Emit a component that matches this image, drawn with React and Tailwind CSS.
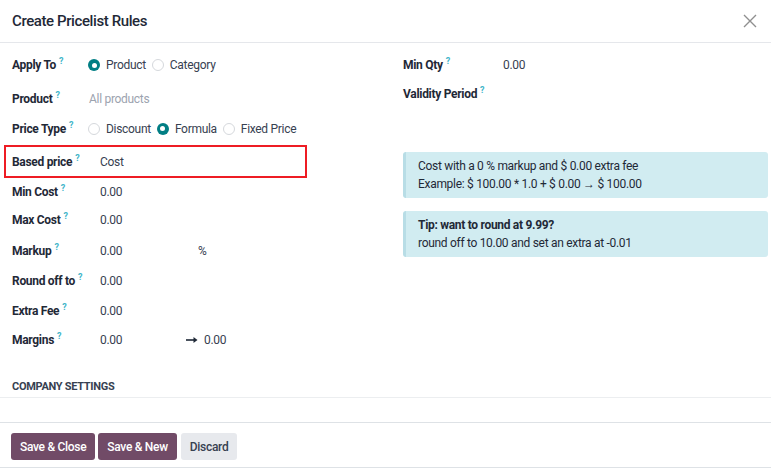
import React from "react";

const Help = () => (
  <span className="ml-[3px] text-[9px] font-bold text-[#3fb5c9] relative -top-[5px]">?</span>
);

const Radio = ({ checked, label }) => (
  <span className="flex items-center gap-[6px] mr-[6px]">
    {checked ? (
      <span className="w-[12px] h-[12px] rounded-full bg-[#017e84] flex items-center justify-center">
        <span className="w-[5px] h-[5px] rounded-full bg-white" />
      </span>
    ) : (
      <span className="w-[12px] h-[12px] rounded-full border border-[#d5d8dc] bg-white" />
    )}
    <span className="text-[#374151]">{label}</span>
  </span>
);

const Label = ({ children }) => (
  <div className="font-bold text-[#1f2937] whitespace-nowrap">
    {children}
    <Help />
  </div>
);

const Row = ({ label, children, h = "h-[30px]" }) => (
  <div className={`flex items-center ${h}`}>
    <div className="w-[76px] shrink-0">
      <Label>{label}</Label>
    </div>
    <div className="flex items-center text-[#374151]">{children}</div>
  </div>
);

export default function App() {
  return (
    <div
      className="w-[771px] h-[468px] bg-white text-[12px] tracking-[-0.3px] overflow-hidden flex flex-col"
      style={{ fontFamily: 'Roboto, "Noto Sans", sans-serif' }}
    >
      <div className="h-[43px] shrink-0 flex items-center justify-between px-[12px] border-b border-[#e5e7eb]">
        <div className="text-[15px] font-medium text-[#1f2937] tracking-[-0.4px]">Create Pricelist Rules</div>
        <svg width="14" height="14" viewBox="0 0 14 14" className="mr-[2px]">
          <path d="M1 1 L13 13 M13 1 L1 13" stroke="#8f8f8f" strokeWidth="1.4" />
        </svg>
      </div>

      <div className="flex-1 flex flex-col">
        <div className="flex pt-[7px]">
          <div className="w-[391px] shrink-0 flex flex-col pl-[12px]">
            <Row label="Apply To">
              <Radio checked label="Product" />
              <Radio label="Category" />
            </Row>
            <Row label="Product" h="h-[37px]">
              <span className="text-[#9ca3af] pl-[1px]">All products</span>
            </Row>
            <Row label="Price Type" h="h-[23px]">
              <Radio label="Discount" />
              <Radio checked label="Formula" />
              <Radio label="Fixed Price" />
            </Row>
            <div className="-ml-[8px] mt-[5px] w-[303px] h-[33px] border-2 border-[#ee1c24] flex items-center pl-[6px]">
              <div className="w-[88px] shrink-0">
                <Label>Based price</Label>
              </div>
              <span className="text-[#374151]">Cost</span>
            </div>
            <Row label="Min Cost" h="h-[27px]">
              <span className="pl-[12px]">0.00</span>
            </Row>
            <Row label="Max Cost">
              <span className="pl-[12px]">0.00</span>
            </Row>
            <Row label="Markup" h="h-[31px]">
              <span className="pl-[12px] w-[110px]">0.00</span>
              <span>%</span>
            </Row>
            <Row label="Round off to">
              <span className="pl-[12px]">0.00</span>
            </Row>
            <Row label="Extra Fee" h="h-[29px]">
              <span className="pl-[12px]">0.00</span>
            </Row>
            <Row label="Margins">
              <span className="pl-[12px] w-[98px]">0.00</span>
              <svg width="12" height="8" viewBox="0 0 12 8" className="mr-[6px]">
                <path d="M0 4 H9" stroke="#1f2937" strokeWidth="1.6" />
                <path d="M7.5 1 L11.5 4 L7.5 7 Z" fill="#1f2937" />
              </svg>
              <span>0.00</span>
            </Row>
          </div>

          <div className="flex-1 flex flex-col pl-[12px] pr-[3px]">
            <div className="flex items-center h-[30px]">
              <div className="w-[100px] shrink-0">
                <Label>Min Qty</Label>
              </div>
              <span className="text-[#374151]">0.00</span>
            </div>
            <div className="flex items-center h-[28px]">
              <Label>Validity Period</Label>
            </div>
            <div className="mt-[44px] bg-[#d1ecf1] border-l-[3px] border-[#b8dde6] rounded-[3px] h-[46px] flex flex-col justify-center pl-[12px] text-[#1f2937] leading-[18px]">
              <div>Cost with a 0 % markup and $ 0.00 extra fee</div>
              <div>Example: $ 100.00 * 1.0 + $ 0.00 → $ 100.00</div>
            </div>
            <div className="mt-[13px] bg-[#d1ecf1] border-l-[3px] border-[#b8dde6] rounded-[3px] h-[46px] flex flex-col justify-center pl-[12px] text-[#1f2937] leading-[18px]">
              <div className="font-bold">Tip: want to round at 9.99?</div>
              <div>round off to 10.00 and set an extra at -0.01</div>
            </div>
          </div>
        </div>

        <div className="mt-[23px] pl-[12px] font-bold text-[11px] text-[#374151] h-[19px] flex items-center">
          COMPANY SETTINGS
        </div>
        <div className="border-b border-[#eceef0] w-full" />
      </div>

      <div className="shrink-0 border-t border-[#dee2e6] h-[45px] flex items-center pl-[11px] gap-[3px] pt-[3px]">
        <button className="h-[27px] px-[9px] rounded-[3px] bg-[#714b67] text-white font-medium">Save &amp; Close</button>
        <button className="h-[27px] px-[9px] rounded-[3px] bg-[#714b67] text-white font-medium">Save &amp; New</button>
        <button className="h-[27px] px-[9px] rounded-[3px] bg-[#e7e9ed] text-[#374151] font-medium ml-[1px]">Discard</button>
      </div>
      <div className="h-[1px] bg-[#dee2e6] shrink-0" />
    </div>
  );
}
